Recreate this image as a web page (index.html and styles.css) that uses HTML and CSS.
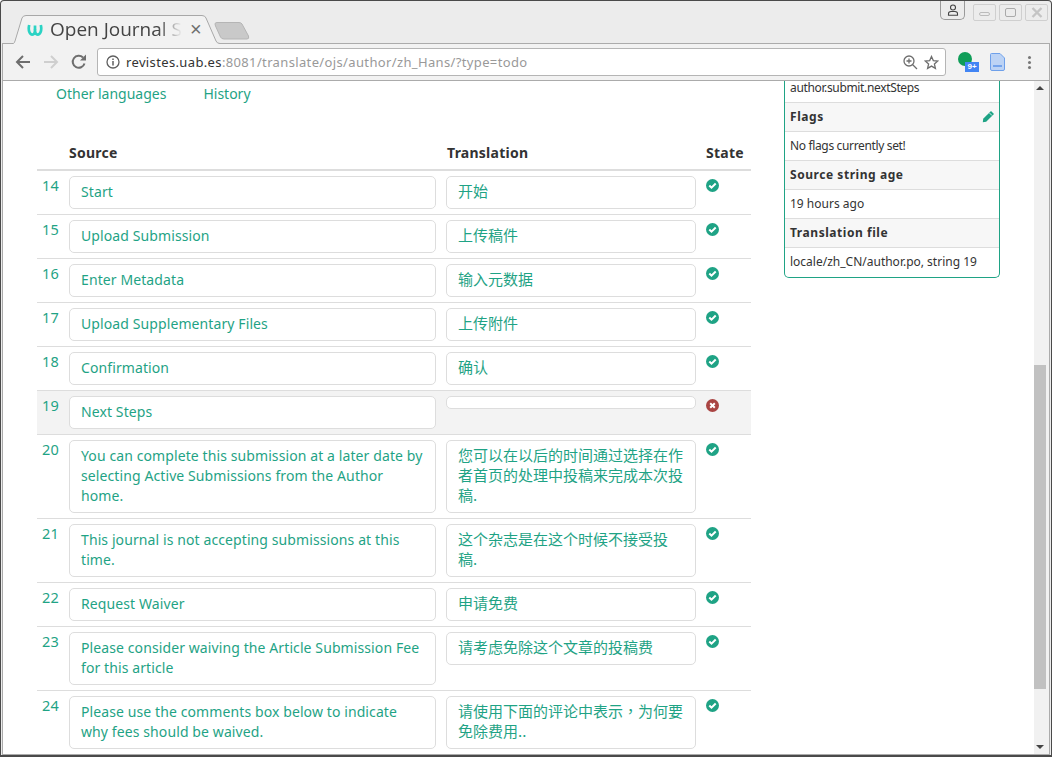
FILE: index.html
```html
<!DOCTYPE html>
<html lang="en">
<head>
<meta charset="utf-8">
<title>Open Journal Systems</title>
<link rel="stylesheet" href="styles.css">
</head>
<body>
<div class="window">
  <header class="tabstrip">
    <svg class="tabshape" width="250" height="32" viewBox="0 0 250 32">
      <path d="M0 29.500H1L10 4Q11 1.500 14 1.500H190Q193 1.500 194 4L204 27Q205 29.500 208 29.500V32H0Z" fill="#f2f2f2"/>
      <path d="M0 29.500H1.500Q2 29.500 3 27L10 4Q11 1.500 14 1.500H190Q193 1.500 194 4L204 27Q205 29.500 208 29.500" fill="none" stroke="#a8a8a8"/>
      <path d="M203 10Q203 8.500 205 8.500H227Q229 8.500 230 10L236.500 22Q237.500 25 235 25H212Q209.500 25 208.500 23L203.500 12Z" fill="#c9c9c9" stroke="#b5b5b5"/>
    </svg>
    <div class="tab">
      <svg class="favicon" width="16" height="12" viewBox="0 0 16 12">
        <path d="M2.200 1C.8 7 3 10.600 5.300 10.600C7.300 10.600 8 8 8 5.500C8 8 8.700 10.600 10.700 10.600C13 10.600 15.200 7 13.800 1" fill="none" stroke="#2bd3c4" stroke-width="2.700"/>
        <path d="M8 6V1.500" stroke="#2bd3c4" stroke-width="2.700"/>
      </svg>
      <span class="tabtitle">Open Journal S</span>
      <span class="tabclose">×</span>
    </div>
    <div class="winctl">
      <div class="profile">
        <svg width="12" height="12" viewBox="0 0 12 12"><circle cx="6" cy="3.500" r="2.500" fill="none" stroke="#444" stroke-width="1.100"/><path d="M1.500 11.300V9.500Q1.500 7.800 4 7.500H8Q10.500 7.800 10.500 9.500V11.300Z" fill="none" stroke="#444" stroke-width="1.100"/></svg>
      </div>
      <div class="ctl"><span class="ctl-min"></span></div>
      <div class="ctl"><span class="ctl-max"></span></div>
      <div class="ctl">
        <svg width="12" height="11" viewBox="0 0 12 11"><path d="M1.500 1L10.500 10M10.500 1L1.500 10" stroke="#c4c4c4" stroke-width="2.400" fill="none"/></svg>
      </div>
    </div>
  </header>
  <nav class="toolbar">
    <svg class="navicon" width="16" height="14" viewBox="0 0 16 14"><path d="M15 7H2M8 1L2 7L8 13" fill="none" stroke="#6e6e6e" stroke-width="2"/></svg>
    <svg class="navicon" width="16" height="14" viewBox="0 0 16 14"><path d="M1 7H14M8 1L14 7L8 13" fill="none" stroke="#cfcfcf" stroke-width="2"/></svg>
    <svg class="navicon" width="16" height="16" viewBox="0 0 16 16"><path d="M13.500 9.500A6 6 0 1 1 12 3.500" fill="none" stroke="#6e6e6e" stroke-width="2"/><path d="M9 6.500H15V.5Z" fill="#6e6e6e"/></svg>
    <div class="omnibox">
      <svg width="14" height="14" viewBox="0 0 14 14"><circle cx="7" cy="7" r="6" fill="none" stroke="#5f5f5f" stroke-width="1.300"/><path d="M7 6V10.500M7 3.500V5" stroke="#5f5f5f" stroke-width="1.500"/></svg>
      <div class="url">revistes.uab.es<span class="url-dim">:8081/translate/ojs/author/zh_Hans/?type=todo</span></div>
      <svg width="15" height="15" viewBox="0 0 15 15"><circle cx="6" cy="6" r="5" fill="none" stroke="#6e6e6e" stroke-width="1.300"/><path d="M9.500 9.500L14 14M3.500 6H8.500M6 3.500V8.500" stroke="#6e6e6e" stroke-width="1.300"/></svg>
      <svg width="15" height="15" viewBox="0 0 15 15"><path d="M7.500 1.500L9.300 5.600L13.800 6L10.400 9L11.400 13.400L7.500 11.100L3.600 13.400L4.600 9L1.200 6L5.700 5.600Z" fill="none" stroke="#6e6e6e" stroke-width="1.300"/></svg>
    </div>
    <div class="extensions">
      <div class="ext-badge">
        <span class="ext-dot"></span>
        <span class="ext-count">9+</span>
      </div>
      <svg width="15" height="18" viewBox="0 0 15 18"><path d="M1.500 .5H10L14.500 5V16Q14.500 17.500 13 17.500H2Q.5 17.500 .5 16V1.500Q.5 .5 1.500 .5Z" fill="#bcd3f5" stroke="#6ea0ea"/><path d="M3 13H12" stroke="#5e95e8" stroke-width="1.500"/></svg>
      <div class="kebab"><span></span><span></span><span></span></div>
    </div>
  </nav>
  <div class="viewport">
    <main class="page">
      <div class="content">
        <div class="tabs-links"><a>Other languages</a><a>History</a></div>
        <div class="table">
          <div class="thead"><span></span><span>Source</span><span>Translation</span><span>State</span></div>
          <div class="row"><a class="num">14</a><div class="box">Start</div><div class="box zh">开始</div><svg class="state"><use href="#ok"/></svg></div>
          <div class="row"><a class="num">15</a><div class="box">Upload Submission</div><div class="box zh">上传稿件</div><svg class="state"><use href="#ok"/></svg></div>
          <div class="row"><a class="num">16</a><div class="box">Enter Metadata</div><div class="box zh">输入元数据</div><svg class="state"><use href="#ok"/></svg></div>
          <div class="row"><a class="num">17</a><div class="box">Upload Supplementary Files</div><div class="box zh">上传附件</div><svg class="state"><use href="#ok"/></svg></div>
          <div class="row"><a class="num">18</a><div class="box">Confirmation</div><div class="box zh">确认</div><svg class="state"><use href="#ok"/></svg></div>
          <div class="row row-current"><a class="num">19</a><div class="box">Next Steps</div><div class="box box-empty"></div><svg class="state"><use href="#bad"/></svg></div>
          <div class="row"><a class="num">20</a><div class="box">You can complete this submission at a later date by selecting Active Submissions from the Author home.</div><div class="box zh">您可以在以后的时间通过选择在作者首页的处理中投稿来完成本次投稿.</div><svg class="state"><use href="#ok"/></svg></div>
          <div class="row"><a class="num">21</a><div class="box">This journal is not accepting submissions at this time.</div><div class="box zh">这个杂志是在这个时候不接受投稿.</div><svg class="state"><use href="#ok"/></svg></div>
          <div class="row"><a class="num">22</a><div class="box">Request Waiver</div><div class="box zh">申请免费</div><svg class="state"><use href="#ok"/></svg></div>
          <div class="row"><a class="num">23</a><div class="box">Please consider waiving the Article Submission Fee for this article</div><div class="box zh">请考虑免除这个文章的投稿费</div><svg class="state"><use href="#ok"/></svg></div>
          <div class="row"><a class="num">24</a><div class="box">Please use the comments box below to indicate why fees should be waived.</div><div class="box zh">请使用下面的评论中表示<span class="zh-mark">，</span>为何要免除费用..</div><svg class="state"><use href="#ok"/></svg></div>
        </div>
      </div>
      <aside class="panel">
        <div class="cell cell-tight">author.submit.nextSteps</div>
        <div class="cell cell-head">Flags
          <svg class="pencil" width="13" height="13" viewBox="0 0 13 13"><path d="M9 1L12 4L4.200 11.800L.8 12.300L1.200 8.800Z" fill="#1fa385"/><path d="M7.500 3L10 5.500" stroke="#fff" stroke-width=".8"/></svg>
        </div>
        <div class="cell cell-tight">No flags currently set!</div>
        <div class="cell cell-head">Source string age</div>
        <div class="cell">19 hours ago</div>
        <div class="cell cell-head">Translation file</div>
        <div class="cell">locale/zh_CN/author.po, string 19</div>
      </aside>
    </main>
    <div class="scrollbar">
      <span class="arrow-up"></span>
      <div class="track"><div class="thumb"></div></div>
      <span class="arrow-down"></span>
    </div>
  </div>
</div>
<svg class="defs" width="0" height="0">
  <symbol id="ok" viewBox="0 0 13 13"><circle cx="6.500" cy="6.500" r="6.500" fill="#1fa385"/><path d="M3.300 6.500L5.500 8.700L9.700 4.500" fill="none" stroke="#fff" stroke-width="2"/></symbol>
  <symbol id="bad" viewBox="0 0 13 13"><circle cx="6.500" cy="6.500" r="6.500" fill="#a94442"/><path d="M4.200 4.200L8.800 8.800M8.800 4.200L4.200 8.800" fill="none" stroke="#fff" stroke-width="2"/></symbol>
</svg>
</body>
</html>
```

FILE: styles.css
```css
* { box-sizing: border-box; }
html, body { margin: 0; padding: 0; overflow: hidden; }
body { width: 1052px; height: 757px; background: #fff; font-family: "Noto Sans", "Noto Sans CJK SC", sans-serif; }
a { color: inherit; text-decoration: none; }
.defs { position: absolute; }

.window {
  width: 1052px; height: 757px;
  display: flex; flex-direction: column;
  border: 1px solid #4a4a4a; border-bottom-width: 2px; border-radius: 4px 4px 0 0;
  background: #ececec; overflow: hidden;
}
.tabstrip { position: relative; height: 42px; flex: none; display: flex; align-items: flex-start; }
.tabshape { position: absolute; left: 11px; top: 13px; }
.tab {
  position: relative; width: 200px; height: 28px; margin: 14px 0 0 26px;
  display: flex; align-items: center; gap: 7px;
}
.favicon { flex: none; margin-top: 1px; }
.tabtitle {
  font: 19px/26px "Open Sans", sans-serif; color: #444; width: 132px; overflow: hidden; white-space: nowrap;
  -webkit-mask-image: linear-gradient(90deg, #000 82%, transparent 100%);
  mask-image: linear-gradient(90deg, #000 82%, transparent 100%);
}
.tabclose { font: 20px/20px "Liberation Sans", sans-serif; color: #6e6e6e; margin-left: 1px; }
.winctl { margin-left: auto; display: flex; align-items: flex-start; gap: 3px; padding-right: 3px; }
.profile {
  width: 25px; height: 19px; margin-right: 5px; border: 1px solid #9a9a9a; border-top: 0;
  border-radius: 0 0 5px 5px; display: flex; align-items: center; justify-content: center; background: #ececec;
}
.ctl {
  width: 23px; height: 17px; margin-top: 3px; border: 1px solid #cfcfcf; border-radius: 2px;
  display: flex; align-items: center; justify-content: center;
}
.ctl-min { width: 11px; height: 4px; margin-top: 3px; border: 1px solid #bbb; border-radius: 2px; }
.ctl-max { width: 11px; height: 9px; border: 1px solid #aaa; border-radius: 2px; }

.toolbar {
  height: 38px; flex: none; display: flex; align-items: center;
  margin: 0 1px; padding: 0 0 0 12px; background: #f2f2f2;
  border: 1px solid #ababab;
}
.navicon { flex: none; margin-right: 12px; }
.omnibox {
  width: 849px; height: 28px; margin-left: -2px; padding: 0 6px 0 8px;
  display: flex; align-items: center; gap: 6px;
  background: #fff; border: 1px solid #b5b5b5; border-radius: 3px;
}
.omnibox svg { flex: none; }
.url { flex: 1; font: 13px/18px "Noto Sans", sans-serif; color: #333; letter-spacing: .36px; white-space: nowrap; }
.url-dim { color: #999; }
.extensions { display: flex; align-items: center; margin-left: 12px; }
.ext-badge { position: relative; width: 22px; height: 26px; margin-right: 10px; }
.ext-dot { position: absolute; left: 0; top: 3px; width: 14px; height: 14px; border-radius: 50%; background: #0f9d58; }
.ext-count {
  position: absolute; left: 7px; top: 13px; width: 14px; height: 10px; background: #4285f4; color: #fff;
  font: bold 8px/10px "Liberation Sans", sans-serif; text-align: center;
}
.kebab { margin-left: 23px; display: flex; flex-direction: column; gap: 2px; }
.kebab span { width: 3px; height: 3px; border-radius: 50%; background: #777; }

.viewport { flex: 1; min-height: 0; margin: 0 1px; display: flex; background: #fff; border: 1px solid #ababab; border-top: 0; }
.page { flex: 1; min-width: 0; display: flex; align-items: flex-start; overflow: hidden; }
.content { width: 748px; flex: none; padding-left: 34px; }
.tabs-links { height: 63px; padding: 3px 0 0 19px; display: flex; gap: 37px; font-size: 14px; line-height: 20px; color: #1fa385; }
.thead {
  display: grid; grid-template-columns: 27px 367px 250px auto; padding-left: 5px;
  height: 27px; font-weight: 700; font-size: 14px; line-height: 18px; color: #333; letter-spacing: .25px; border-bottom: 2px solid #ddd;
}
.thead span:nth-child(3) { margin-left: 11px; }
.thead span:nth-child(4) { margin-left: 20px; }
.row {
  display: grid; grid-template-columns: 17px 367px 250px 13px; column-gap: 10px; align-items: start;
  padding: 5px 0 5px 5px; border-bottom: 1px solid #ddd;
  font-size: 14px; line-height: 20px; color: #1fa385; letter-spacing: .1px;
}
.row-current { background: #f3f3f3; }
.num { margin-top: -1px; font-size: 14.5px; }
.box { padding: 5px 11px 6px; min-height: 33px; background: #fff; border: 1px solid #ddd; border-radius: 5px; }
.zh { font-family: "Noto Sans CJK SC", "Noto Sans", sans-serif; font-size: 15px; letter-spacing: 0; padding-top: 4px; padding-bottom: 7px; }
.zh-mark { font-family: "Noto Sans CJK TC", sans-serif; }
.box-empty { min-height: 13px; height: 13px; padding: 0; }
.state { width: 13px; height: 13px; margin-top: 3px; }

.panel {
  width: 216px; margin-left: 33px; flex: none; background: #fff; font-size: 12px; line-height: 16px; color: #333;
  border: 1px solid #1fa385; border-top: 0; border-radius: 0 0 5px 5px; overflow: hidden;
}
.cell { height: 29px; padding: 6px 5px; border-bottom: 1px solid #ddd; white-space: nowrap; }
.cell:last-child { border-bottom: 0; }
.cell:first-child { height: 22px; padding-top: 0; line-height: 14px; }
.cell-tight { letter-spacing: -.35px; }
.cell-head { position: relative; background: #f7f7f7; font-weight: 700; letter-spacing: .55px; display: flex; justify-content: space-between; }
.pencil { margin: 1px -1px 0 0; }

.scrollbar { width: 15px; flex: none; background: #f1f1f1; display: flex; flex-direction: column; align-items: center; }
.track { flex: 1; width: 100%; padding-right: 3px; padding-top: 270px; }
.thumb { height: 324px; background: #c1c1c1; }
.arrow-up, .arrow-down { width: 0; height: 0; border-left: 4px solid transparent; border-right: 4px solid transparent; margin: 5px 3px 5px 0; }
.arrow-up { border-bottom: 4px solid #444; }
.arrow-down { border-top: 4px solid #444; }
```
